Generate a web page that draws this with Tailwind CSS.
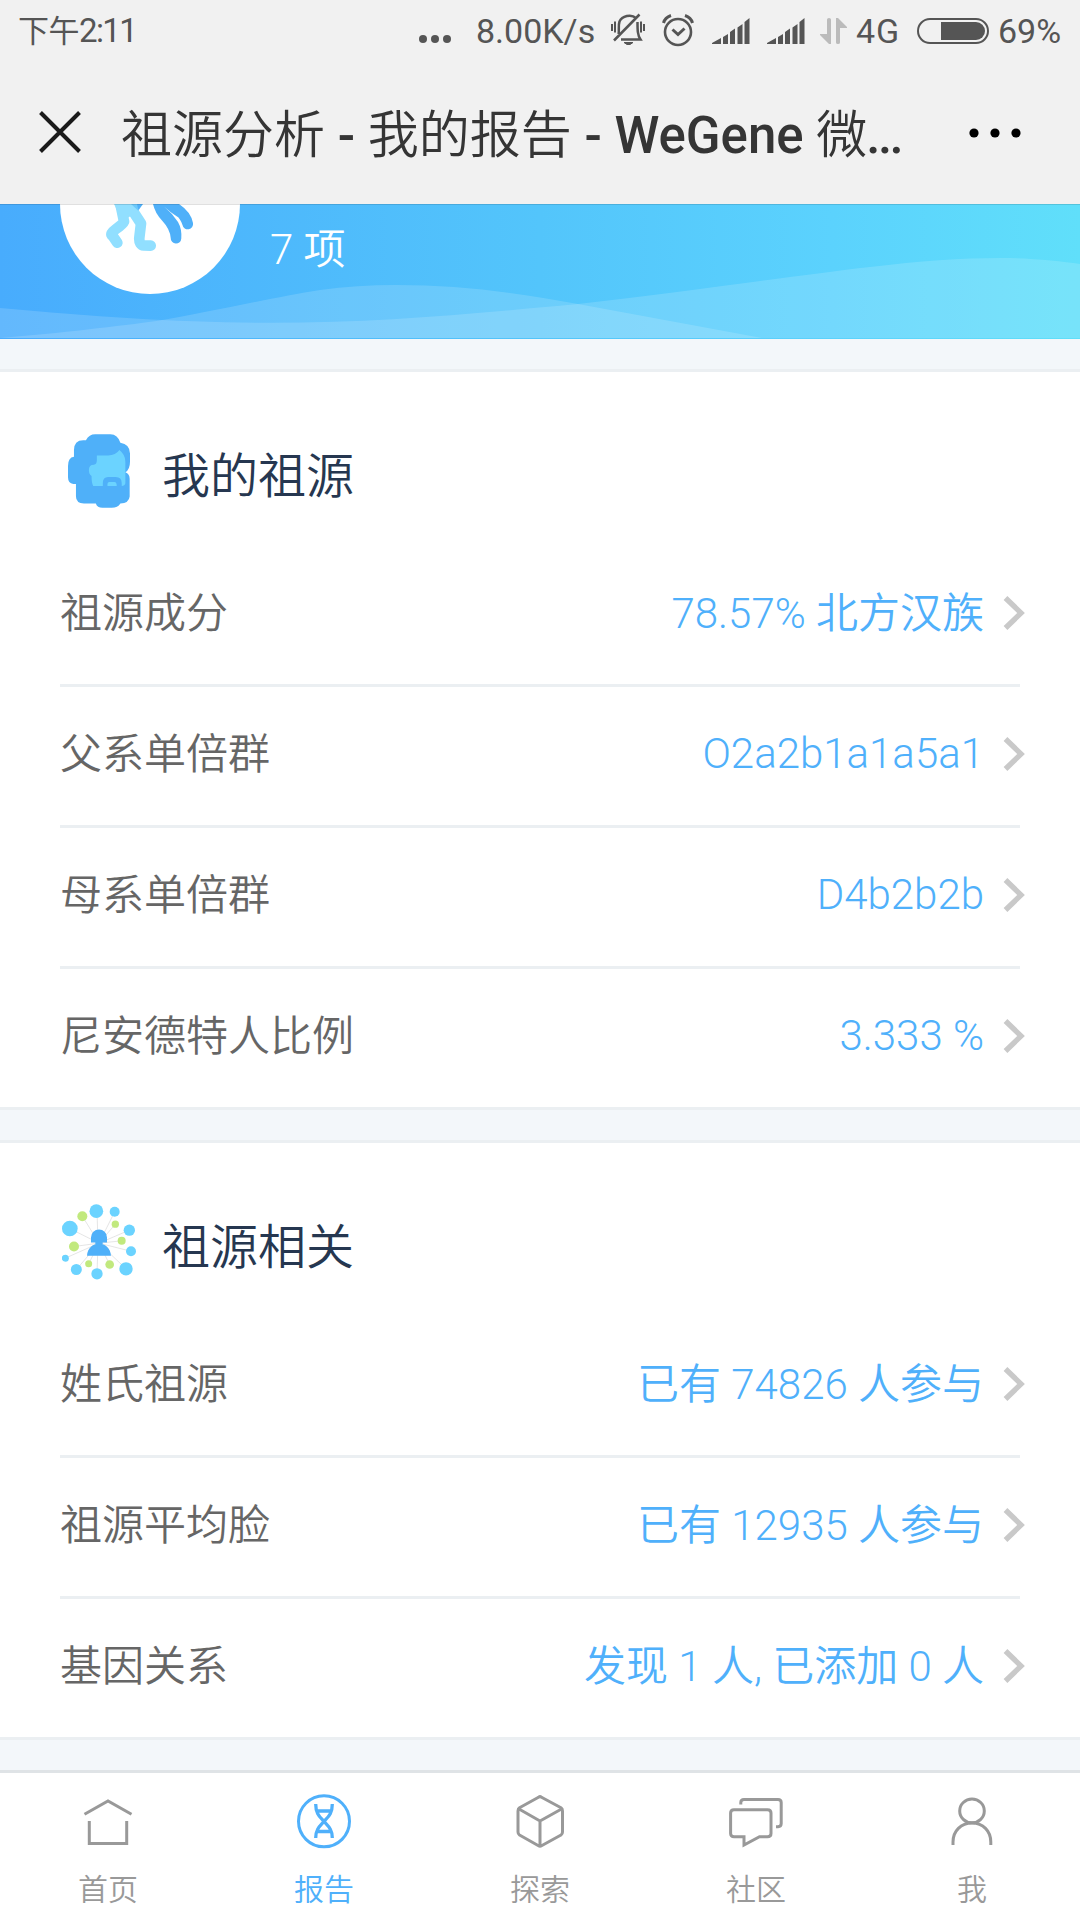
<!DOCTYPE html>
<html lang="zh-CN">
<head>
    <meta charset="UTF-8">
    <meta name="viewport" content="width=device-width, initial-scale=1.0">
    <title>祖源分析 - 我的报告 - WeGene</title>
    <script src="https://cdn.jsdelivr.net/npm/@tailwindcss/browser@4"></script>
</head>
<body class="bg-[#f3f7fa] w-[1080px] h-[1920px] overflow-hidden flex flex-col font-['Roboto','Noto_Sans_CJK_SC',sans-serif]">
    <!-- Header -->
    <header class="h-[204px] shrink-0 bg-[#f1f1f1]">
        <!-- Status bar -->
        <div class="h-[62px] flex items-center justify-between pl-[18px] pr-[17px] text-[34px] text-[#555]">
            <div class="flex items-center"><span class="mt-[2px] text-[31px] tracking-[-0.5px]">下午</span><span class="text-[33px] tracking-[-1.6px]">2:11</span></div>
            <div class="flex items-center">
                <svg class="w-8 h-8 mt-4 mr-[25px]" viewBox="0 0 32 32" fill="#555"><circle cx="4" cy="16" r="4"/><circle cx="16" cy="16" r="4"/><circle cx="28" cy="16" r="4"/></svg>
                <span class="w-[120px] whitespace-nowrap">8.00K/s</span>
                <!-- muted bell -->
                <svg class="w-[34px] h-[34px] ml-[15px] -mt-[3px]" viewBox="0 0 34 34" fill="none" stroke="#555" stroke-width="2.5">
                    <path d="M1 11v7M4 8.5v11M30 8.5v11M33 11v7" stroke-width="2"/>
                    <path d="M7.500 21C8.500 17 7 13 8.500 8.500 11 3 20 .5 25 5M26.500 9C26.500 17 26.500 22 29.500 26.500H10M3 27.500 28.500 1.500"/>
                    <path d="M13 29.500h9l-3 2h-3z" fill="#555" stroke-width="1"/>
                </svg>
                <!-- alarm -->
                <svg class="w-[32px] h-[34px] ml-[17px] -mt-[3px]" viewBox="0 0 32 34" fill="none" stroke="#555" stroke-width="2.6">
                    <circle cx="16" cy="19" r="13"/>
                    <path d="M1.500 10Q3 4.500 9 2.500M30.500 10Q29 4.500 23 2.500" stroke-width="3"/>
                    <path d="m10.500 16.500 5.500 5 6.500-6" stroke-width="3"/>
                </svg>
                <!-- signal, sim 1 and sim 2 -->
                <svg class="w-[38px] h-[26px] ml-[18px]" viewBox="0 0 38 26" fill="#555"><path d="M0 26v-1L9 20v6zM11 26v-7l5-3v10zM18 26V14l5-3.500V26zM25.500 26V9.500L30.500 6v20zM32.500 26V4l5-4v26z"/></svg>
                <svg class="w-[38px] h-[26px] ml-[17px]" viewBox="0 0 38 26" fill="#555"><path d="M0 26v-1L9 20v6zM11 26v-7l5-3v10zM18 26V14l5-3.500V26zM25.500 26V9.500L30.500 6v20zM32.500 26V4l5-4v26z"/></svg>
                <svg class="w-[27px] h-[26px] ml-[15px]" viewBox="0 0 27 26" fill="#bbb"><path d="M7 1.500Q7 0 9 0t2 1.500V26H9L0 17v-1h7zM16 0h2l9 9v1h-7v14.500q0 1.500-2 1.500t-2-1.500z"/></svg>
                <span class="ml-[9px] w-[46px] whitespace-nowrap tracking-[1px]">4G</span>
                <svg class="w-[72px] h-[26px] ml-[15px]" viewBox="0 0 72 26" fill="none"><rect x="1" y="1" width="70" height="24" rx="12" stroke="#555" stroke-width="2"/><path d="M24 4h35a9 9 0 0 1 0 18H24z" fill="#555"/></svg>
                <span class="ml-[9px] w-[65px] whitespace-nowrap">69%</span>
            </div>
        </div>
        <!-- Title bar -->
        <div class="h-[142px] flex items-start pl-[39px] pt-[42px]">
            <svg class="w-[42px] h-[42px] mt-[7px]" viewBox="0 0 42 42" stroke="#1a1a1a" stroke-width="4"><path d="m1.500 1.500 39 39M40.500 1.500l-39 39"/></svg>
            <h1 class="ml-[40px] mt-[2px] w-[790px] text-[51px] leading-[60px] font-[350] text-[#353535] whitespace-nowrap">祖源分析<span class="font-medium"> - </span>我的报告<span class="font-medium"> - WeGene </span>微<span class="font-medium tracking-[-2.6px] -ml-px">...</span></h1>
            <svg class="w-[52px] h-3 ml-[58px] mt-[23px]" viewBox="0 0 52 12" fill="#000"><circle cx="5" cy="6" r="4.600"/><circle cx="26" cy="6" r="4.600"/><circle cx="47" cy="6" r="4.600"/></svg>
        </div>
    </header>

    <!-- Banner -->
    <div class="relative h-[135px] shrink-0">
        <svg class="absolute inset-0 w-[1080px] h-[135px]" viewBox="0 0 1080 135">
            <defs>
                <linearGradient id="banner"><stop offset="0" stop-color="#48acfd"/><stop offset=".5" stop-color="#53c5fb"/><stop offset=".77" stop-color="#5bd2fd"/><stop offset="1" stop-color="#60dffa"/></linearGradient>
            </defs>
            <path d="M0 0H1080V135H0z" fill="url(#banner)"/>
            <g fill="#fff" fill-opacity=".15">
                <path d="M0 104C100 113 180 118.700 272 118.700C380 118.700 470 110 578 100C700 86 800 71 870 63C920 57 960 54 1001 54C1030 54 1060 57 1080 60V134H0z"/>
                <path d="M0 134C60 129 120 122 158 116.700C200 110 270 94 320 86C345 82.500 370 81 396 81C460 81 520 89 578 100L762 134z"/>
            </g>
            <circle cx="150" cy="0" r="90" fill="#fff"/>
            <!-- runners' legs -->
            <path d="M134 0H143L138 7z" fill="#4fb0f9"/>
            <path d="M153 0Q155 9 162 16.500Q170 25 170.700 34A5.300 5.300 0 0 0 181.300 34.500Q182 25 178 18Q172 9 164 2.500Q171 9 177 12.500Q180 14 182.500 21A5.300 5.300 0 0 0 193 19Q191 8 179 0z" fill="#4fb0f9"/>
            <path d="M114 0H131L139 8 129 13 123 18z" fill="#91dfff"/>
            <path d="M120-2 124 17.500Q123 20 116 25T112.700 32L117.300 38.700M129 1 141 19.500 139.300 34Q139 41 144 41.500L150.700 41.700" fill="none" stroke="#91dfff" stroke-width="10.700" stroke-linecap="round" stroke-linejoin="round"/>
            <path d="M131 0H137L138.500 7z" fill="#6cc9fb"/>
            <path d="M0 0H1080V1H0z" fill="#000" fill-opacity=".12"/>
        </svg>
        <p class="relative pl-[270px] pt-[16px] text-[42px] leading-[60px] font-light text-white">7 <span class="font-[350]">项</span></p>
    </div>

    <main class="flex flex-col gap-[30px] pt-[30px] h-[1431px] shrink-0 text-[42px]">
        <!-- My ancestry -->
        <section class="bg-white border-y-3 border-[#ebeff2] px-[60px]">
            <div class="h-[174px] flex items-center pt-[32px]">
                <svg class="w-[62px] h-[74px] ml-[8px] -mt-[8px]" viewBox="84 42 187 222" fill="#4fb0f9">
                    <path d="M108 230V192H100Q84 190 84 172V138Q84 112 102 110V90Q102 60 130 60H138Q148 42 166 42H212Q234 42 242 68Q270 72 271 100V125Q271 148 257 157Q270 162 270 176V230Q268 250 242 251Q234 264 216 264H188Q172 264 168 251H132Q108 250 108 230z"/>
                    <path d="M171 106H205Q228 106 239 90Q257 104 257 125V190Q255 198 246 198V190Q246 171 228 171H205Q189 171 189 190V198H160Q155 190 155 168Q147 164 147 150Q147 134 162 134Q171 134 171 120zM203 198V192Q203 186 209 186H224Q231 186 231 198z" fill="#6bd3ff"/>
                </svg>
                <h2 class="ml-[32px] mt-[4px] text-[48px] leading-[60px] font-[350] text-[#263750]">我的祖源</h2>
            </div>
            <ul class="divide-y-3 divide-[#ebeff2]">
                <li class="h-[141px] flex items-center justify-between pb-[4px]">
                    <span class="font-[350] text-[#666]">祖源成分</span>
                    <span class="flex items-center -mr-[5px] font-light text-[#4fb0fb]"><span>78.57% <span class="font-[350]">北方汉族</span></span><svg class="w-[22px] h-[34px] ml-[19px]" viewBox="0 0 22 34" fill="none" stroke="#c9c9c9" stroke-width="5.400"><path d="M2.500 2 18 17 2.500 32"/></svg></span>
                </li>
                <li class="h-[141px] flex items-center justify-between pb-[4px]">
                    <span class="font-[350] text-[#666]">父系单倍群</span>
                    <span class="flex items-center -mr-[5px] font-light text-[#4fb0fb]"><span class="-mt-[2px]">O2a2b1a1a5a1</span><svg class="w-[22px] h-[34px] ml-[19px]" viewBox="0 0 22 34" fill="none" stroke="#c9c9c9" stroke-width="5.400"><path d="M2.500 2 18 17 2.500 32"/></svg></span>
                </li>
                <li class="h-[141px] flex items-center justify-between pb-[4px]">
                    <span class="font-[350] text-[#666]">母系单倍群</span>
                    <span class="flex items-center -mr-[5px] font-light text-[#4fb0fb]"><span class="-mt-[2px]">D4b2b2b</span><svg class="w-[22px] h-[34px] ml-[19px]" viewBox="0 0 22 34" fill="none" stroke="#c9c9c9" stroke-width="5.400"><path d="M2.500 2 18 17 2.500 32"/></svg></span>
                </li>
                <li class="h-[138px] flex items-center justify-between pb-[4px]">
                    <span class="font-[350] text-[#666]">尼安德特人比例</span>
                    <span class="flex items-center -mr-[5px] font-light text-[#4fb0fb]"><span class="-mt-[2px]">3.333 %</span><svg class="w-[22px] h-[34px] ml-[19px]" viewBox="0 0 22 34" fill="none" stroke="#c9c9c9" stroke-width="5.400"><path d="M2.500 2 18 17 2.500 32"/></svg></span>
                </li>
            </ul>
        </section>

        <!-- Related -->
        <section class="bg-white border-y-3 border-[#ebeff2] px-[60px]">
            <div class="h-[174px] flex items-center pt-[32px]">
                <svg class="w-[74px] h-[76px] ml-[2px] -mt-[8px]" viewBox="66 71 222 227">
                    <path d="M177 188L89 144M177 188L127 107M174 188L171 92M174 188L171 280M177 188L224 94M177 188L226 131M177 188L268 149M177 188L245 181M177 188L272 212M177 188L258 265M177 188L209 252M177 188L146 250M177 188L109 267M177 188L76 233M177 188L102 198" fill="none" stroke="#e0e0e0" stroke-width="2.500"/>
                    <g fill="#6bd3ff"><circle cx="89.500" cy="144" r="23.500"/><circle cx="169" cy="92" r="20.500"/><circle cx="224" cy="94" r="15"/><circle cx="268" cy="149" r="17"/><circle cx="273" cy="212" r="15"/><circle cx="258" cy="265" r="20"/><circle cx="171" cy="280" r="17"/><circle cx="109" cy="267" r="16.500"/><circle cx="76" cy="233" r="10.500"/></g>
                    <g fill="#c1e97e"><circle cx="127" cy="107" r="15"/><circle cx="226" cy="131" r="11"/><circle cx="245" cy="181" r="12"/><circle cx="209" cy="252" r="13"/><circle cx="146" cy="250" r="10.500"/><circle cx="102" cy="198" r="15"/></g>
                    <path d="M153 186V171a24 24 0 0 1 48 0V186H188V192H166V186zM141 226C142 204 158 190 177 190S212 204 213 226z" fill="#4fb0f9"/>
                </svg>
                <h2 class="ml-[26px] mt-[4px] text-[48px] leading-[60px] font-[350] text-[#263750]">祖源相关</h2>
            </div>
            <ul class="divide-y-3 divide-[#ebeff2]">
                <li class="h-[141px] flex items-center justify-between pb-[4px]">
                    <span class="font-[350] text-[#666]">姓氏祖源</span>
                    <span class="flex items-center -mr-[5px] font-light text-[#4fb0fb]"><span><span class="font-[350]">已有</span> 74826 <span class="font-[350]">人参与</span></span><svg class="w-[22px] h-[34px] ml-[19px]" viewBox="0 0 22 34" fill="none" stroke="#c9c9c9" stroke-width="5.400"><path d="M2.500 2 18 17 2.500 32"/></svg></span>
                </li>
                <li class="h-[141px] flex items-center justify-between pb-[4px]">
                    <span class="font-[350] text-[#666]">祖源平均脸</span>
                    <span class="flex items-center -mr-[5px] font-light text-[#4fb0fb]"><span><span class="font-[350]">已有</span> 12935 <span class="font-[350]">人参与</span></span><svg class="w-[22px] h-[34px] ml-[19px]" viewBox="0 0 22 34" fill="none" stroke="#c9c9c9" stroke-width="5.400"><path d="M2.500 2 18 17 2.500 32"/></svg></span>
                </li>
                <li class="h-[138px] flex items-center justify-between pb-[4px]">
                    <span class="font-[350] text-[#666]">基因关系</span>
                    <span class="flex items-center -mr-[5px] font-light text-[#4fb0fb]"><span><span class="font-[350]">发现</span> 1 <span class="font-[350]">人</span>, <span class="font-[350]">已添加</span> 0 <span class="font-[350]">人</span></span><svg class="w-[22px] h-[34px] ml-[19px]" viewBox="0 0 22 34" fill="none" stroke="#c9c9c9" stroke-width="5.400"><path d="M2.500 2 18 17 2.500 32"/></svg></span>
                </li>
            </ul>
        </section>
    </main>

    <!-- Tab bar -->
    <nav class="h-[150px] shrink-0 bg-white border-t-3 border-[#dfe3e6] grid grid-cols-5 text-[30px] leading-[44px] font-[350] text-[#999]">
        <a class="flex flex-col items-center pt-[19px]">
            <svg class="w-[60px] h-[60px]" viewBox="0 0 60 60" fill="none" stroke="currentColor" stroke-width="3"><path d="M6.500 22.300 30 9 53.500 22.300M11.300 29V51.500H48.700V29"/></svg>
            <span class="mt-[16px]">首页</span>
        </a>
        <a class="flex flex-col items-center pt-[19px] text-[#4fb0fb]">
            <svg class="w-[60px] h-[60px]" viewBox="0 0 60 60" fill="none" stroke="currentColor" stroke-width="3"><circle cx="30" cy="29.300" r="25.500"/><path d="M21.700 12C21.700 22 26 25 30 29.500C34 34 38.300 37 38.300 46M38.300 12C38.300 22 34 25 30 29.500C26 34 21.700 37 21.700 46M23 19H37M23 39.500H37" stroke-width="3.300"/></svg>
            <span class="mt-[16px]">报告</span>
        </a>
        <a class="flex flex-col items-center pt-[19px]">
            <svg class="w-[60px] h-[60px]" viewBox="0 0 60 60" fill="none" stroke="currentColor" stroke-width="3" stroke-linejoin="round"><path d="M28.500 5.300Q30 4 31.500 5.300L51 15.800Q52.500 16.800 52.500 19V40Q52.500 42 51 43L31.500 53.700Q30 54.700 28.500 53.700L9.500 43Q8 42 8 40V19Q8 16.800 9.500 15.800zM9 17 30 29 51.500 17M30 29V54"/></svg>
            <span class="mt-[16px]">探索</span>
        </a>
        <a class="flex flex-col items-center pt-[19px]">
            <svg class="w-[60px] h-[60px]" viewBox="0 0 60 60" fill="none" stroke="currentColor" stroke-width="3"><path d="M8 17.700H41.500Q45 17.700 45 21V41.500Q45 44.700 41.500 44.700H33.500L18 53V44.700H8Q4.600 44.700 4.600 41.500V21Q4.600 17.700 8 17.700zM14.800 12.500V10.500Q14.800 7.500 18 7.500H52Q55.200 7.500 55.200 10.500V31.500Q55.200 34.500 52 34.700H50"/></svg>
            <span class="mt-[16px]">社区</span>
        </a>
        <a class="flex flex-col items-center pt-[19px]">
            <svg class="w-[60px] h-[60px]" viewBox="0 0 60 60" fill="none" stroke="currentColor" stroke-width="3"><ellipse cx="30" cy="18.900" rx="12.300" ry="11.900"/><path d="M11 53V50C11 39 19 31 30 31S48.800 39 48.800 50V53"/></svg>
            <span class="mt-[16px]">我</span>
        </a>
    </nav>
</body>
</html>
